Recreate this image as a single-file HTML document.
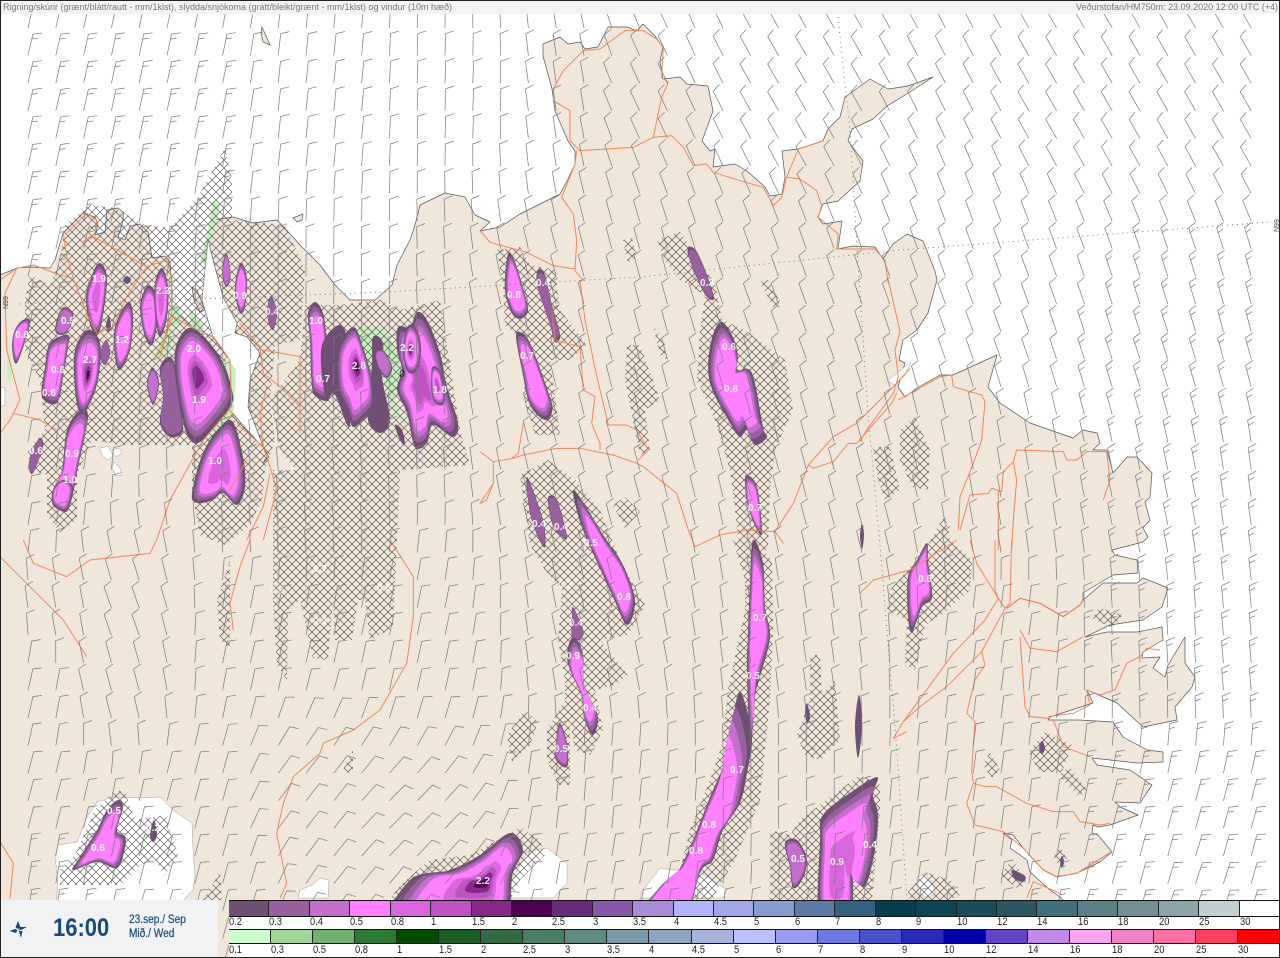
<!DOCTYPE html>
<html><head><meta charset="utf-8"><title>Veðurstofan</title>
<style>
html,body{margin:0;padding:0;background:#fff;width:1280px;height:958px;overflow:hidden}
#w{position:absolute;left:0;top:0;width:1280px;height:958px;overflow:hidden;font-family:"Liberation Sans",sans-serif}
svg{position:absolute;left:0;top:0}
.lg{position:absolute;left:229px;top:900px;width:1051px;height:58px;background:#fff}
.r{position:absolute;left:0;width:1051px;display:flex;box-sizing:border-box;border-top:1px solid #111;border-bottom:1px solid #111}
.r i{display:block;flex:1;height:100%;box-sizing:border-box;border-right:1px solid #222}
.t{position:absolute;left:0;width:1051px;display:flex;font-size:11px;line-height:13px;color:#222}
.t b{display:block;flex:1;font-weight:normal}
.t b span{display:inline-block;transform:scaleX(.85);transform-origin:left}
.p{position:absolute;left:0;top:900px;width:218px;height:58px;background:#f1f2f4;color:#174a7c}
.p .h{position:absolute;left:53px;top:14px;font-size:25px;line-height:28px;font-weight:bold;transform:scaleX(.88);transform-origin:left}
.p .d{position:absolute;left:129px;font-size:11.5px;line-height:14px;transform:scaleX(.88);transform-origin:left;white-space:nowrap;-webkit-text-stroke:.2px #174a7c}
</style></head><body><div id="w">
<svg width="1280" height="958" viewBox="0 0 1280 958" xmlns="http://www.w3.org/2000/svg">
<defs>
<pattern id="x" width="8" height="8" patternUnits="userSpaceOnUse"><path d="M0 0L8 8M8 0L0 8" stroke="#3e3838" stroke-width=".55" fill="none"/></pattern>
</defs>
<rect width="1280" height="958" fill="#fff"/>
<path id="land" fill="#f0e6d9" stroke="#555" stroke-width=".7" stroke-linejoin="round" d="M0 275L17 268L30 267L50 268L55 260L63 233L83 213L95 217L98 225L95 235L105 232L107 210L118 208L124 213L122 225L118 237L125 240L130 226L140 224L148 232L152 258L165 256L170 262L172 290L172 307L193 327L213 337L227 357L232 387L230 410L247 430L263 447L269 457L263 463L267 457L258 433L248 407L250 380L260 353L247 337L235 333L237 323L223 297L213 260L208 240L213 220L233 217L253 223L277 220L293 237L300 245L320 265L335 285L350 300L375 300L392 285L397 265L410 240L415 225L420 205L445 193L465 197L475 215L490 222L480 231L500 227L520 214L540 204L560 194L568 179L575 164L575 151L568 141L562 127L555 111L552 89L543 56L543 44L560 37L568 44L580 42L585 49L598 47L608 27L627 27L637 31L643 24L655 36L663 47L660 61L663 79L680 77L687 84L708 86L713 111L702 141L710 151L715 149L713 167L735 164L747 171L765 187L770 196L782 194L785 177L782 151L798 149L823 141L828 129L840 117L845 97L870 79L888 89L908 86L933 77L910 92L887 106L873 119L852 129L848 141L863 161L860 181L838 201L823 204L818 217L823 224L842 221L838 249L853 246L875 247L883 259L893 244L907 234L923 241L935 271L937 280L928 313L917 330L903 340L899 360L905 363L898 387L905 397L917 388L940 375L953 375L997 355L988 387L1000 403L1030 423L1073 438L1083 430L1097 433L1100 443L1093 450L1107 450L1113 473L1127 457L1137 457L1152 473L1150 497L1145 502L1150 520L1143 528L1148 537L1143 542L1112 550L1115 555L1137 560L1138 573L1113 575L1083 593L1083 600L1103 583L1137 583L1143 578L1168 588L1162 607L1143 620L1110 625L1085 637L1107 632L1137 632L1162 627L1163 640L1143 652L1142 658L1160 657L1153 668L1165 677L1168 665L1185 637L1185 663L1195 677L1192 687L1175 707L1177 720L1143 727L1117 703L1087 690L1093 703L1050 717L1048 720L1080 720L1113 722L1123 737L1147 750L1163 752L1163 762L1137 763L1092 758L1097 765L1130 770L1152 785L1140 803L1115 802L1120 807L1138 815L1110 825L1098 827L1093 825L1092 833L1098 835L1112 852L1100 862L1077 873L1057 877L1043 870L1023 848L1013 835L1003 833L1012 840L1010 848L1027 860L1030 872L1050 890L1060 897L1063 900L1063 958L0 958Z"/>
<path fill="#f0e6d9" stroke="#555" stroke-width=".7" d="M262 27L270 45L263 42L261 33ZM293 218L303 214L302 220L297 222ZM192 287L197 290L205 310L200 312L194 300Z"/>
<!-- white inland -->
<path fill="#fff" stroke="#888" stroke-width=".4" d="M55 857L58 845L77 842L87 817L97 802L113 797L140 798L160 797L173 810L192 823L193 847L195 877L193 890L185 898L178 958L52 958L58 880Z"/>
<path fill="#fff" stroke="#888" stroke-width=".4" d="M527 852L547 848L567 863L567 883L553 898L503 898ZM643 890L660 868L673 870L697 870L727 890L723 898L640 898ZM917 878L925 873L933 885L935 893L928 898L919 893ZM300 890L312 885L320 878L329 880L328 898L298 898ZM887 381L911 362L905 375L895 385ZM1 387L5 388L5 405L1 407ZM100 448L108 446L113 455L108 460L102 455ZM112 450L119 448L122 453L116 457ZM114 462L120 468L122 475L116 476L112 468Z"/>
<!-- green -->
<path fill="#c9f0c0" d="M213 200L220 205L213 235L205 265L200 262L208 230ZM173 305L180 307L182 325L170 325ZM188 308L203 325L205 335L192 327ZM170 320L172 345L157 362L153 360L160 342ZM225 355L237 365L235 410L215 440L205 442L225 415L230 390ZM8 345L13 370L10 385L7 375ZM355 327L383 327L397 350L402 370L393 397L407 427L397 417L388 397L383 377L373 380L367 370Z"/>
<!-- hatch -->
<path fill="url(#x)" d="M65 225L90 205L115 208L145 225L170 228L198 197L225 148L232 180L232 220L285 225L305 270L300 340L275 345L270 400L275 440L265 470L262 500L250 525L225 545L200 535L192 490L192 445L120 445L92 440L77 475L77 520L60 532L47 515L47 475L30 470L28 450L45 430L40 380L25 350L25 300L30 275L50 285L60 260Z
M305 305L340 305L380 300L400 310L440 300L460 430L470 465L400 470L300 475L280 450L270 400L300 360Z
M273 470L400 470L393 628L370 640L365 600L358 600L352 640L335 640L333 600L328 660L313 658L300 600L288 610L287 680L277 665L273 600Z
M520 475L548 460L575 480L600 510L620 560L645 605L628 635L600 640L628 675L615 685L595 690L603 730L590 755L575 750L570 720L570 785L558 785L547 760L547 730L565 700L565 680L558 640L562 590L545 570L530 545Z
M613 505L625 497L640 512L625 528ZM507 735L525 710L538 722L530 745L512 762Z
M400 885L430 860L470 855L520 828L540 840L545 855L520 880L510 900L390 900Z
M733 540L750 538L772 560L773 630L770 700L760 800L735 860L720 885L712 900L660 895L680 870L690 830L710 780L722 745L728 690L745 610L745 580Z
M657 240L680 232L700 260L715 285L722 320L745 330L785 360L793 410L775 450L770 490L768 550L740 550L730 470L715 420L697 380L700 330L705 295L680 280L665 260Z
M623 240L632 238L637 258L628 262ZM760 282L768 280L782 305L775 310ZM627 345L640 345L660 400L645 410L650 450L640 455L625 380ZM653 325L665 345L667 360L660 355Z
M497 250L520 247L530 265L555 270L560 310L587 345L570 360L550 360L560 435L535 435L525 400L522 340L505 325L503 285Z
M900 430L915 417L930 450L928 490L912 487L900 460ZM873 447L890 447L900 490L885 500L878 480ZM945 515L950 540L972 560L970 590L945 612L925 625L915 670L905 665L907 620L887 610L890 590L925 550Z
M797 735L810 700L810 655L820 655L822 695L835 680L840 740L820 760L805 755Z
M770 830L790 835L800 820L840 790L860 775L880 785L880 810L872 900L770 900Z
M60 870L75 855L95 810L115 790L125 792L135 820L165 815L178 855L165 875L155 860L140 865L120 885L60 885Z
M203 900L220 872L222 900ZM217 600L230 560L230 650L220 640ZM343 770L353 750L353 775ZM1028 752L1045 732L1072 745L1062 772L1040 772ZM1058 775L1070 768L1087 790L1080 797ZM983 765L990 752L1000 770L992 778ZM1092 618L1100 608L1123 615L1112 628ZM1053 857L1060 847L1067 858L1060 867ZM1000 875L1012 860L1027 880L1020 890ZM908 892L925 872L950 880L960 895L950 900L910 900Z"/>
<!-- fjord stays clear of hatch -->
<path fill="#fff" stroke="#666" stroke-width=".6" d="M205 310L202 300L208 240L213 260L223 297L237 323L235 333L247 337L260 353L250 380L248 407L258 433L267 457L263 447L247 430L230 410L232 387L227 357L213 337Z"/>
<path fill="#c9f0c0" d="M225 355L236 370L234 410L225 423L230 400Z"/>
<g id="blobs"></g>
<!-- roads -->
<g fill="none" stroke="#ef8557" stroke-width=".95" stroke-linejoin="round">
<g transform="translate(480 14) scale(.33333)" stroke-width="2.9">
<polyline points="220,225 250,170 310,110 360,105 435,50 490,50 530,75 550,100 545,190 565,205 545,250 520,370 460,400 300,410 270,380 270,290 220,260 220,225"/>
<polyline points="290,410 285,450 265,500 245,550 280,600 290,680 285,770 310,800"/>
<polyline points="520,370 575,365 610,400 640,455 680,450 700,475 780,500 850,520 880,575 905,550 920,490 955,405 1030,380"/>
<polyline points="920,490 960,495 1010,530 1025,575 1015,610 1075,660 1070,705 1185,705 1215,740 1225,810"/>
<polyline points="0,650 30,685 140,715 220,755 285,765"/>
</g>
<g transform="translate(480 280) scale(.33333)" stroke-width="2.9">
<polyline points="0,515 40,545 100,535 130,525 230,505 300,505 400,525 470,550 490,560 590,640 625,750 645,800 720,765 800,750 885,755 940,670 985,555 1060,470 1130,430 1250,310 1290,265"/>
<polyline points="985,555 1000,565 1060,545 1105,490 1130,490 1235,370 1250,340"/>
<polyline points="300,0 315,120 345,265 385,435 440,435 470,450 505,510 475,540"/>
<polyline points="300,200 310,330 345,350 335,430 360,490 360,510"/>
<polyline points="130,430 115,520 95,535"/><polyline points="215,90 225,180 300,200"/>
<polyline points="40,545 40,610 0,670 20,660 40,610"/><polyline points="885,755 910,790"/>
</g>
<g transform="translate(860 540) scale(.33333)" stroke-width="2.9">
<polyline points="0,160 40,120 150,90 290,0"/><polyline points="330,0 350,70 415,175 435,205"/><polyline points="455,0 450,190 435,205"/><polyline points="405,0 405,150 415,175"/>
<polyline points="415,175 375,240 280,340 130,545 100,595 140,575"/><polyline points="435,205 400,270 365,335 260,440 180,500 130,545"/>
<polyline points="365,335 375,375 345,420 320,520 345,545 335,690 340,730 320,790 345,855 430,875 490,925 550,990 590,1010 650,1000 755,935"/>
<polyline points="440,205 480,175 540,190 610,230 660,195 670,180" stroke="#e8663a"/>
<polyline points="480,270 510,325 590,335 670,290"/><polyline points="480,290 495,500 510,530 565,535"/><polyline points="580,540 610,620 690,650"/>
<polyline points="565,530 640,520 690,495 680,450 720,465 765,450 800,370 840,350 860,325 900,330"/>
<polyline points="340,730 375,740 410,740 500,790 580,815 640,815 660,845 720,855 750,850"/>
<polyline points="600,1060 520,1025 500,1075"/>
</g>
<g transform="translate(860 280) scale(.33333)" stroke-width="2.9">
<polyline points="85,0 120,155 105,210 115,290 100,340 20,450 0,485"/><polyline points="115,360 240,290 275,285 280,320 365,345 375,365 365,480 340,550 300,650 295,750"/>
<polyline points="470,510 610,515 620,540 650,540 680,515 740,515 750,600 730,660"/>
<polyline points="470,510 460,545 430,575 425,635 395,625 385,640 330,645 300,750"/><polyline points="460,545 470,600 460,720 455,810"/><polyline points="415,630 415,810"/>
</g>
<g transform="translate(0 200) scale(.33333)" stroke-width="2.9">
<polyline points="0,240 50,205 100,195 180,225 220,235 260,340 290,400 340,380 380,290 440,200 500,180 515,230 515,340 490,430 460,480 480,470 510,370 520,350 570,380 640,410 690,480 695,620 610,720 510,900 470,1020"/>
<polyline points="200,100 260,40 290,60 285,100 250,125 280,110 440,200"/><polyline points="190,100 200,170 220,235"/>
<polyline points="50,205 15,280 20,450 60,600 30,660 0,700"/><polyline points="40,640 120,660 170,690"/>
<polyline points="690,630 720,680 790,740 810,800 830,870 790,1020"/><polyline points="720,370 780,440 790,520 840,560 900,620"/>
<polyline points="790,450 900,470 900,700"/><polyline points="800,560 780,640 790,740"/><polyline points="740,1020 790,920 810,820"/><polyline points="690,870 740,780"/>
</g>
<g transform="translate(0 540) scale(.33333)" stroke-width="2.9">
<polyline points="70,0 100,70 200,110 270,60 450,40 470,0"/><polyline points="0,50 90,140 190,240 260,350"/><polyline points="700,270 690,190 720,80 750,0"/>
<polyline points="1170,0 1240,110 1240,230 1220,370 1140,510 1060,570 970,610 960,640 880,710 850,790 830,880 860,1030 840,1075"/><polyline points="0,905 40,970 30,1075"/>
</g>
</g>
<g id="barbs"></g>
<!-- dotted -->
<g fill="none" stroke="#6e6e6e" stroke-width=".9" stroke-dasharray="1 4">
<polyline points="20,304 200,299 385,292 640,277 900,250 1270,222"/>
<polyline points="838,17 850,130 857,247 868,413 880,545 897,753 907,900"/>
</g>
<text transform="translate(8 309) rotate(-90)" font-family="Liberation Sans" font-size="7" fill="#444">N99</text>
<text transform="translate(1279 232) rotate(-90)" font-family="Liberation Sans" font-size="7" fill="#444">N99</text>
<!-- labels -->
<g font-family="Liberation Sans" font-size="10" font-weight="bold" fill="#fff" text-anchor="middle" opacity=".92">
<text x="99" y="282">1.9</text><text x="90" y="363">2.7</text><text x="22" y="338">0.8</text><text x="68" y="324">0.5</text><text x="58" y="373">0.6</text><text x="49" y="396">0.6</text><text x="122" y="343">1.2</text><text x="163" y="294">2.2</text><text x="194" y="352">2.0</text><text x="199" y="403">1.9</text><text x="215" y="464">1.0</text><text x="36" y="454">0.6</text><text x="72" y="457">0.9</text><text x="70" y="483">1.0</text><text x="240" y="299">0.9</text><text x="272" y="315">0.4</text>
<text x="316" y="324">1.0</text><text x="323" y="382">0.7</text><text x="359" y="369">2.8</text><text x="407" y="351">2.2</text><text x="440" y="393">1.8</text>
<text x="514" y="298">0.8</text><text x="543" y="286">0.4</text><text x="527" y="359">0.7</text><text x="707" y="286">0.3</text><text x="729" y="350">0.6</text><text x="731" y="392">0.8</text><text x="755" y="511">0.7</text><text x="539" y="527">0.4</text><text x="561" y="530">0.4</text><text x="591" y="546">0.5</text><text x="624" y="600">0.8</text><text x="320" y="572">0.7</text><text x="384" y="591">0.6</text><text x="277" y="593" opacity=".6">0.2</text><text x="320" y="624" opacity=".7">0.3</text><text x="565" y="588" opacity=".7">0.2</text><text x="576" y="626">0.4</text><text x="573" y="659">0.9</text><text x="590" y="711">0.4</text><text x="561" y="752">0.5</text><text x="760" y="621">0.7</text><text x="753" y="679">0.5</text><text x="737" y="773">0.7</text><text x="709" y="828">0.8</text><text x="696" y="854">0.8</text><text x="483" y="884">2.2</text><text x="798" y="862">0.5</text><text x="837" y="865">0.9</text><text x="870" y="848">0.4</text><text x="114" y="814">0.5</text><text x="98" y="851">0.6</text><text x="153" y="831">0.2</text><text x="925" y="582">0.6</text>
</g>
<text x="402" y="377" font-family="Liberation Sans" font-size="10" fill="#222" text-anchor="middle">0</text>
<!-- header -->
<rect x="0" y="0" width="1280" height="14" fill="#f3f3f3"/>
<text x="3" y="10" font-family="Liberation Sans" font-size="9" fill="#777" textLength="449" lengthAdjust="spacingAndGlyphs">Rigning/skúrir (grænt/blátt/rautt - mm/1klst), slydda/snjókoma (grátt/bleikt/grænt - mm/1klst) og vindur (10m hæð)</text>
<text x="1076" y="10" font-family="Liberation Sans" font-size="9" fill="#777" textLength="202" lengthAdjust="spacingAndGlyphs">Veðurstofan/HM750m: 23.09.2020 12:00 UTC (+4)</text>
</svg>
<div class="p">
<svg width="40" height="58" style="left:0;top:0"><path fill="#1b4a75" d="M18 21L20.5 27L18 29L15.5 27.5ZM27 27L21 30L18.5 29.5L20 27ZM21 38L18.5 30L20 31L22.5 31ZM9.5 31L15 29L17.5 30L16 33Z"/></svg>
<div class="h">16:00</div>
<div class="d" style="top:13px">23.sep./ Sep</div>
<div class="d" style="top:27px">Mið./ Wed</div>
</div>
<div class="lg">
<div class="r" style="top:0;height:17px"><i style="background:#6f4f73"></i><i style="background:#99609f"></i><i style="background:#c46fce"></i><i style="background:#ff80ff"></i><i style="background:#d966dc"></i><i style="background:#c053c3"></i><i style="background:#862a8a"></i><i style="background:#4f0050"></i><i style="background:#662c7a"></i><i style="background:#8557a7"></i><i style="background:#a98cd8"></i><i style="background:#b3b3ff"></i><i style="background:#a0a6e8"></i><i style="background:#8a9bd0"></i><i style="background:#5f7ca8"></i><i style="background:#35607f"></i><i style="background:#073d4d"></i><i style="background:#0f4452"></i><i style="background:#1c4c5a"></i><i style="background:#2b5662"></i><i style="background:#42707a"></i><i style="background:#5d8087"></i><i style="background:#738f95"></i><i style="background:#8ba4a8"></i><i style="background:#c2ced2"></i><i style="background:#fff"></i></div>
<div class="t" style="top:16px"><b><span>0.2</span></b><b><span>0.3</span></b><b><span>0.4</span></b><b><span>0.5</span></b><b><span>0.8</span></b><b><span>1</span></b><b><span>1.5</span></b><b><span>2</span></b><b><span>2.5</span></b><b><span>3</span></b><b><span>3.5</span></b><b><span>4</span></b><b><span>4.5</span></b><b><span>5</span></b><b><span>6</span></b><b><span>7</span></b><b><span>8</span></b><b><span>9</span></b><b><span>10</span></b><b><span>12</span></b><b><span>14</span></b><b><span>16</span></b><b><span>18</span></b><b><span>20</span></b><b><span>25</span></b><b><span>30</span></b></div>
<div class="r" style="top:29px;height:15px"><i style="background:#ccffcc"></i><i style="background:#a0d69a"></i><i style="background:#72b06f"></i><i style="background:#2f7a33"></i><i style="background:#004d00"></i><i style="background:#1b5e28"></i><i style="background:#326b44"></i><i style="background:#4a7e63"></i><i style="background:#5f8b83"></i><i style="background:#7a9aa7"></i><i style="background:#8fa4be"></i><i style="background:#a7b3dc"></i><i style="background:#b9bfff"></i><i style="background:#9a9cf0"></i><i style="background:#6e79df"></i><i style="background:#4b52c9"></i><i style="background:#2a2ab8"></i><i style="background:#0000a8"></i><i style="background:#6244c4"></i><i style="background:#c28ae8"></i><i style="background:#f7a7ee"></i><i style="background:#f080c8"></i><i style="background:#fb70a6"></i><i style="background:#ff4060"></i><i style="background:#ff0000"></i></div>
<div class="t" style="top:44px"><b><span>0.1</span></b><b><span>0.3</span></b><b><span>0.5</span></b><b><span>0.8</span></b><b><span>1</span></b><b><span>1.5</span></b><b><span>2</span></b><b><span>2.5</span></b><b><span>3</span></b><b><span>3.5</span></b><b><span>4</span></b><b><span>4.5</span></b><b><span>5</span></b><b><span>6</span></b><b><span>7</span></b><b><span>8</span></b><b><span>9</span></b><b><span>10</span></b><b><span>12</span></b><b><span>14</span></b><b><span>16</span></b><b><span>18</span></b><b><span>20</span></b><b><span>25</span></b><b><span>30</span></b></div>
</div>
<div style="position:absolute;left:0;top:0;width:1278px;height:956px;border:1px solid #222;pointer-events:none"></div>
</div>
<script>
(function(){
var C=["#6f4f73","#99609f","#c46fce","#ff80ff","#d966dc","#c053c3","#862a8a","#4f0050"];
var S=[1,.9,.81,.72,.42,.3,.2,.11];
var B=[
[5,0,0,[100,263,107,280,100,330,92,330,86,300,92,275]],
[8,88,375,[88,330,100,343,98,380,88,407,80,413,75,390,75,350]],
[4,0,0,[80,410,88,417,78,467,73,493,65,512,53,493,62,470,67,430]],
[4,60,490,[63,480,73,487,70,505,65,512,53,505,53,490]],
[4,0,0,[23,320,30,323,17,363,12,347,15,330]],
[3,0,0,[62,308,73,313,70,327,63,335,55,330]],
[4,0,0,[68,335,68,347,63,377,57,403,42,397,45,367,50,343]],
[4,0,0,[128,302,133,317,130,350,120,370,115,357,115,327]],
[4,0,0,[147,286,155,293,157,323,152,345,145,337,140,307]],
[5,0,0,[162,268,168,287,167,317,160,337,155,313,155,283]],
[2,0,0,[160,367,173,360,182,417,182,433,170,437,160,423,163,397]],
[3,0,0,[153,368,159,383,153,405,147,383]],
[7,197,375,[193,328,220,357,232,390,230,407,203,440,190,440,182,417,175,373,177,343]],
[5,220,470,[220,427,233,422,243,457,245,487,237,505,223,493,213,500,197,503,192,493,203,453]],
[2,0,0,[40,438,43,447,33,473,29,467,33,450]],
[4,0,0,[242,263,247,280,245,307,240,313,235,293,237,273]],
[3,0,0,[226,253,230,267,230,280,226,287,222,273]],
[2,0,0,[272,297,277,313,273,330,268,320,268,303]],
[1,0,0,[127,276,131,280,127,284,123,280]],
[2,0,0,[106,340,110,353,105,365,100,355]],
[1,0,0,[109,316,111,328,108,332,106,325]],
[4,0,0,[315,302,323,313,327,340,333,380,328,400,317,397,312,387,310,340,308,313]],
[1,0,0,[322,345,345,330,350,425,335,395,325,395]],
[1,0,0,[373,337,383,343,382,377,390,420,380,433,368,420,370,390,372,363]],
[8,357,365,[353,327,363,347,372,380,373,407,363,420,353,427,348,413,338,390,338,350]],
[3,0,0,[375,352,383,350,392,367,387,378,378,367]],
[6,420,385,[417,312,427,320,440,353,447,387,458,423,453,437,433,425,427,443,415,447,407,413,397,390,402,370,397,350,398,327,410,327]],
[7,410,350,[408,326,417,330,421,350,417,370,408,372,403,352]],
[6,437,385,[432,368,440,372,445,400,438,405,432,395]],
[1,0,0,[395,425,402,430,405,445,400,440]],
[4,0,0,[508,254,515,262,525,295,528,310,523,318,513,315,505,290]],
[2,0,0,[538,270,545,275,552,305,560,335,555,342,550,325,545,310,537,285]],
[4,0,0,[520,332,530,343,550,397,552,412,545,420,530,405,522,370,516,337]],
[2,0,0,[690,247,697,252,707,275,714,298,708,298,700,285,688,255]],
[4,732,382,[720,322,733,337,738,357,737,370,752,373,763,427,767,437,755,445,747,430,740,437,730,423,710,383,710,347]],
[4,0,0,[747,475,757,487,762,530,758,532,748,507,745,483]],
[2,0,0,[527,477,543,520,545,547,538,537,530,513]],
[2,0,0,[548,498,557,500,567,537,560,535,552,523]],
[4,618,580,[573,490,585,505,600,530,610,545,623,565,635,600,627,625,613,597,597,562,585,535,578,515]],
[2,0,0,[573,607,583,630,580,640,572,637,572,620]],
[4,0,0,[573,637,582,650,583,667,585,687,597,713,597,727,592,735,585,720,582,697,570,670,567,653]],
[3,0,0,[560,723,567,743,567,767,555,758,557,737]],
[4,758,625,[753,540,763,563,765,607,770,637,760,677,755,697,752,740,750,750,747,673,748,633,750,583]],
[4,700,850,[740,692,747,710,752,740,747,773,740,803,723,830,713,860,700,873,680,930,630,930,660,887,677,873,693,840,710,797,723,767,732,733,735,707]],
[8,485,882,[510,833,523,850,513,873,496,930,390,930,410,880,450,870,480,855]],
[3,0,0,[785,843,797,840,807,860,802,880,793,888,790,867]],
[5,838,870,[823,815,850,793,877,777,873,795,878,815,875,850,866,885,858,880,853,850,850,930,820,930,820,840]],
[4,105,848,[118,800,123,807,117,830,125,837,125,848,117,868,97,862,73,870,80,857,97,830,107,810]],
[1,0,0,[154,820,157,835,153,842,150,835]],
[4,921,575,[927,543,928,560,932,597,922,607,912,632,908,617,908,577,917,560]],
[1,0,0,[807,703,810,717,807,723,805,713]],
[1,0,0,[862,524,864,535,862,549,860,535]],
[1,0,0,[859,695,862,725,858,758,855,725]],
[1,0,0,[1042,741,1045,748,1042,754,1039,748]],
[1,0,0,[1062,856,1064,862,1062,868,1060,862]],
[1,0,0,[1012,870,1025,876,1023,882,1014,878]]
];
function path(p){
 var n=p.length/2,d="M"+p[0].toFixed(1)+" "+p[1].toFixed(1);
 for(var i=0;i<n;i++){
  var a=(i-1+n)%n,b=(i+1)%n,c=(i+2)%n,t=.167;
  var x1=p[i*2]+(p[b*2]-p[a*2])*t,y1=p[i*2+1]+(p[b*2+1]-p[a*2+1])*t;
  var x2=p[b*2]-(p[c*2]-p[i*2])*t,y2=p[b*2+1]-(p[c*2+1]-p[i*2+1])*t;
  d+="C"+x1.toFixed(1)+" "+y1.toFixed(1)+" "+x2.toFixed(1)+" "+y2.toFixed(1)+" "+p[b*2].toFixed(1)+" "+p[b*2+1].toFixed(1);
 }
 return d+"Z";
}
var g=document.getElementById("blobs"),out="";
B.forEach(function(b){
 var pts=b[3],n=pts.length/2,fx=b[1],fy=b[2];
 if(!fx){fx=0;fy=0;for(var i=0;i<n;i++){fx+=pts[i*2];fy+=pts[i*2+1]}fx/=n;fy/=n}
 for(var l=0;l<b[0];l++){
  var q=[];for(var j=0;j<n;j++){q.push(fx+(pts[j*2]-fx)*S[l],fy+(pts[j*2+1]-fy)*S[l])}
  out+='<path fill="'+C[l]+'" d="'+path(q)+'"/>';
 }
});
g.innerHTML=out;
var W=[[30,60,13,2],[200,100,12,1.7],[300,100,6,1],[470,100,2,1],[550,100,-8,1],[650,100,-25,1],[800,100,-30,1],[1100,100,-30,1],[1250,100,-30,1],
[30,300,13,1.7],[300,300,0,1],[600,300,-15,1],[800,300,-20,1],[1000,300,-20,1],[1150,350,-18,1.5],[1250,350,-15,1.5],
[30,500,10,1],[300,500,-5,1],[600,500,-15,1],[850,500,-15,1],[1000,500,-10,1],[1150,500,-12,1.5],[1250,500,-8,1.5],
[80,620,-10,1],[30,700,13,1],[120,620,-20,1],[110,690,-15,1],[250,650,12,1],[400,650,12,1],[600,650,-12,1],[800,650,-8,1],[1000,650,8,1],[1150,650,-3,1.5],[1250,650,-5,1.5],
[30,800,15,1],[200,800,15,1],[300,800,38,1],[400,830,45,1],[600,800,5,1],[800,800,0,1],[1000,800,8,1.3],[1150,850,15,1.5],[1250,850,15,1.5],
[30,880,10,1.5],[200,890,15,1],[400,890,40,1],[600,880,10,1],[900,880,8,1.3],[1200,890,18,1.7]];
function f(x,y){var sw=0,st=0,ss=0;for(var i=0;i<W.length;i++){var dx=x-W[i][0],dy=y-W[i][1],d=dx*dx+dy*dy+1,w=1/(d*d);sw+=w;st+=w*W[i][2];ss+=w*W[i][3]}return[st/sw,ss/sw]}
var d="";
for(var r=0;r<35;r++){var y=28+r*27.6;for(var c=0;c<45;c++){var x=28+c*27.8;
 var v=f(x,y),t=v[0]*Math.PI/180,ux=Math.sin(t),uy=-Math.cos(t),tx=x+ux*22,ty=y+uy*22;
 var a=t+70*Math.PI/180,bx=Math.sin(a),by=-Math.cos(a);
 d+="M"+x.toFixed(1)+" "+y.toFixed(1)+"L"+tx.toFixed(1)+" "+ty.toFixed(1)+"L"+(tx+bx*9).toFixed(1)+" "+(ty+by*9).toFixed(1);
 if(v[1]>=1.35){var mx=tx-ux*5,my=ty-uy*5;d+="M"+mx.toFixed(1)+" "+my.toFixed(1)+"L"+(mx+bx*6).toFixed(1)+" "+(my+by*6).toFixed(1)}
}}
document.getElementById("barbs").innerHTML='<path fill="none" stroke="#7a7a7a" stroke-width=".7" d="'+d+'"/>';
})();
</script>
</body></html>
